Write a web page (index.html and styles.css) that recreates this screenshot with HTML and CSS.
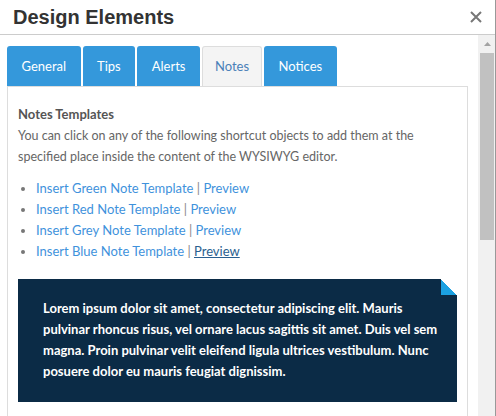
FILE: index.html
```html
<!DOCTYPE html>
<html lang="en">
<head>
  <meta charset="UTF-8" />
  <title>Design Elements</title>
  <meta name="viewport" content="width=device-width, initial-scale=1.0" />
  <link rel="stylesheet" href="styles.css">
</head>
<body>

  <div class="dialog">
    <div class="dialog-header">
      <h1>Design Elements</h1>
      <button class="close-btn" title="Close">
        <svg width="12" height="12" viewBox="0 0 12 12">
          <path d="M1 1 L11 11 M11 1 L1 11" stroke="#777" stroke-width="2" fill="none" />
        </svg>
      </button>
    </div>

    <div class="dialog-body">
      <div class="scroll-content">
        <ul class="tabs">
          <li class="tab">General</li>
          <li class="tab">Tips</li>
          <li class="tab">Alerts</li>
          <li class="tab active">Notes</li>
          <li class="tab">Notices</li>
        </ul>

        <div class="tab-panel">
          <h2>Notes Templates</h2>
          <p>You can click on any of the following shortcut objects to add them at the specified place inside the content of the WYSIWYG editor.</p>

          <ul class="template-list">
            <li><a href="#">Insert Green Note Template</a> <span class="sep">|</span> <a href="#">Preview</a></li>
            <li><a href="#">Insert Red Note Template</a> <span class="sep">|</span> <a href="#">Preview</a></li>
            <li><a href="#">Insert Grey Note Template</a> <span class="sep">|</span> <a href="#">Preview</a></li>
            <li><a href="#">Insert Blue Note Template</a> <span class="sep">|</span> <a href="#" class="hover">Preview</a></li>
          </ul>

          <div class="note note-blue">
            Lorem ipsum dolor sit amet, consectetur adipiscing elit. Mauris pulvinar rhoncus risus, vel ornare lacus sagittis sit amet. Duis vel sem magna. Proin pulvinar velit eleifend ligula ultrices vestibulum. Nunc posuere dolor eu mauris feugiat dignissim.
          </div>

          <div class="note note-green">
            Lorem ipsum dolor sit amet, consectetur adipiscing elit. Mauris pulvinar rhoncus risus, vel ornare lacus sagittis sit amet. Duis vel sem magna. Proin pulvinar velit eleifend ligula ultrices vestibulum. Nunc posuere dolor eu mauris feugiat dignissim.
          </div>
        </div>
      </div>

      <div class="scrollbar">
        <div class="scroll-btn">
          <svg width="7" height="4" viewBox="0 0 7 4"><path d="M3.5 0 L7 4 L0 4 Z" fill="#a3a3a3" /></svg>
        </div>
        <div class="scroll-thumb"></div>
      </div>
    </div>
  </div>

</body>
</html>
```

FILE: styles.css
```css
:root {
  --tab-blue: #3498db;
  --link: #3f92dc;
  --border: #ddd;
  --text: #666;
}

body {
  margin: 0;
  font-family: Lato, "Open Sans", sans-serif;
  color: var(--text);
  background: #fff;
}

.dialog {
  width: 495px;
  height: 416px;
  border-right: 1px solid #999;
  display: flex;
  flex-direction: column;
  overflow: hidden;
}

.dialog-header {
  height: 34px;
  border-bottom: 1px solid #ccc;
  display: flex;
  align-items: center;
  justify-content: space-between;
  padding: 0 13px 0 13px;
  flex-shrink: 0;
}

.dialog-header h1 {
  margin: 0;
  font-family: "Liberation Sans", Arial, sans-serif;
  font-size: 20px;
  font-weight: bold;
  color: #333;
}

.close-btn {
  border: none;
  background: none;
  padding: 0;
  width: 12px;
  height: 12px;
  cursor: pointer;
  display: flex;
}

.dialog-body {
  flex: 1;
  display: flex;
  min-height: 0;
}

.scroll-content {
  flex: 1;
  overflow: hidden;
  padding: 11px 10px 0 7px;
}

/* scrollbar drawn by hand */
.scrollbar {
  width: 17px;
  flex-shrink: 0;
  background: #f1f1f1;
  display: flex;
  flex-direction: column;
}

.scroll-btn {
  height: 17px;
  display: flex;
  align-items: center;
  justify-content: center;
  padding-left: 1px;
}

.scroll-thumb {
  height: 187px;
  margin: 1px 1px 0 2px;
  background: #c1c1c1;
}

/* tabs */
.tabs {
  list-style: none;
  margin: 0;
  padding: 0;
  display: flex;
  gap: 2px;
}

.tab {
  height: 40px;
  line-height: 40px;
  padding: 0 14.5px;
  background: var(--tab-blue);
  color: #fff;
  font-size: 13px;
  border-radius: 3px 3px 0 0;
  cursor: pointer;
}

.tab.active {
  background: #f4f4f4;
  color: #4a80b8;
  border: 1px solid var(--border);
  border-bottom: none;
  height: 39px;
  line-height: 38px;
  padding: 0 12px;
}

.tab-panel {
  border: 1px solid var(--border);
  padding: 17px 10px 17px 10px;
  font-size: 13px;
  line-height: 21px;
}

.tab-panel h2 {
  margin: 0;
  font-size: 13px;
  font-weight: bold;
  color: #555;
}

.tab-panel p {
  margin: 0 0 11px 0;
  font-size: 12.5px;
}

.template-list {
  margin: 0;
  padding-left: 18px;
}

.template-list li::marker {
  color: #777;
  font-size: 12px;
}

.template-list a {
  color: var(--link);
  text-decoration: none;
}

.template-list a.hover {
  color: #2a5f90;
  text-decoration: underline;
}

.sep {
  color: #888;
}

/* notes */
.note {
  position: relative;
  margin-top: 17px;
  padding: 19px 18px 20px 25px;
  color: #fff;
  font-weight: bold;
  font-size: 13px;
  line-height: 21px;
}

.note::before {
  content: "";
  position: absolute;
  top: 0;
  right: 0;
  width: 16px;
  height: 16px;
  background: linear-gradient(to bottom left, #fff 50%, #1ba1e2 50%);
}

.note-blue {
  background: #0b2b46;
}

.note-green {
  background: #1e5b2f;
}
```
